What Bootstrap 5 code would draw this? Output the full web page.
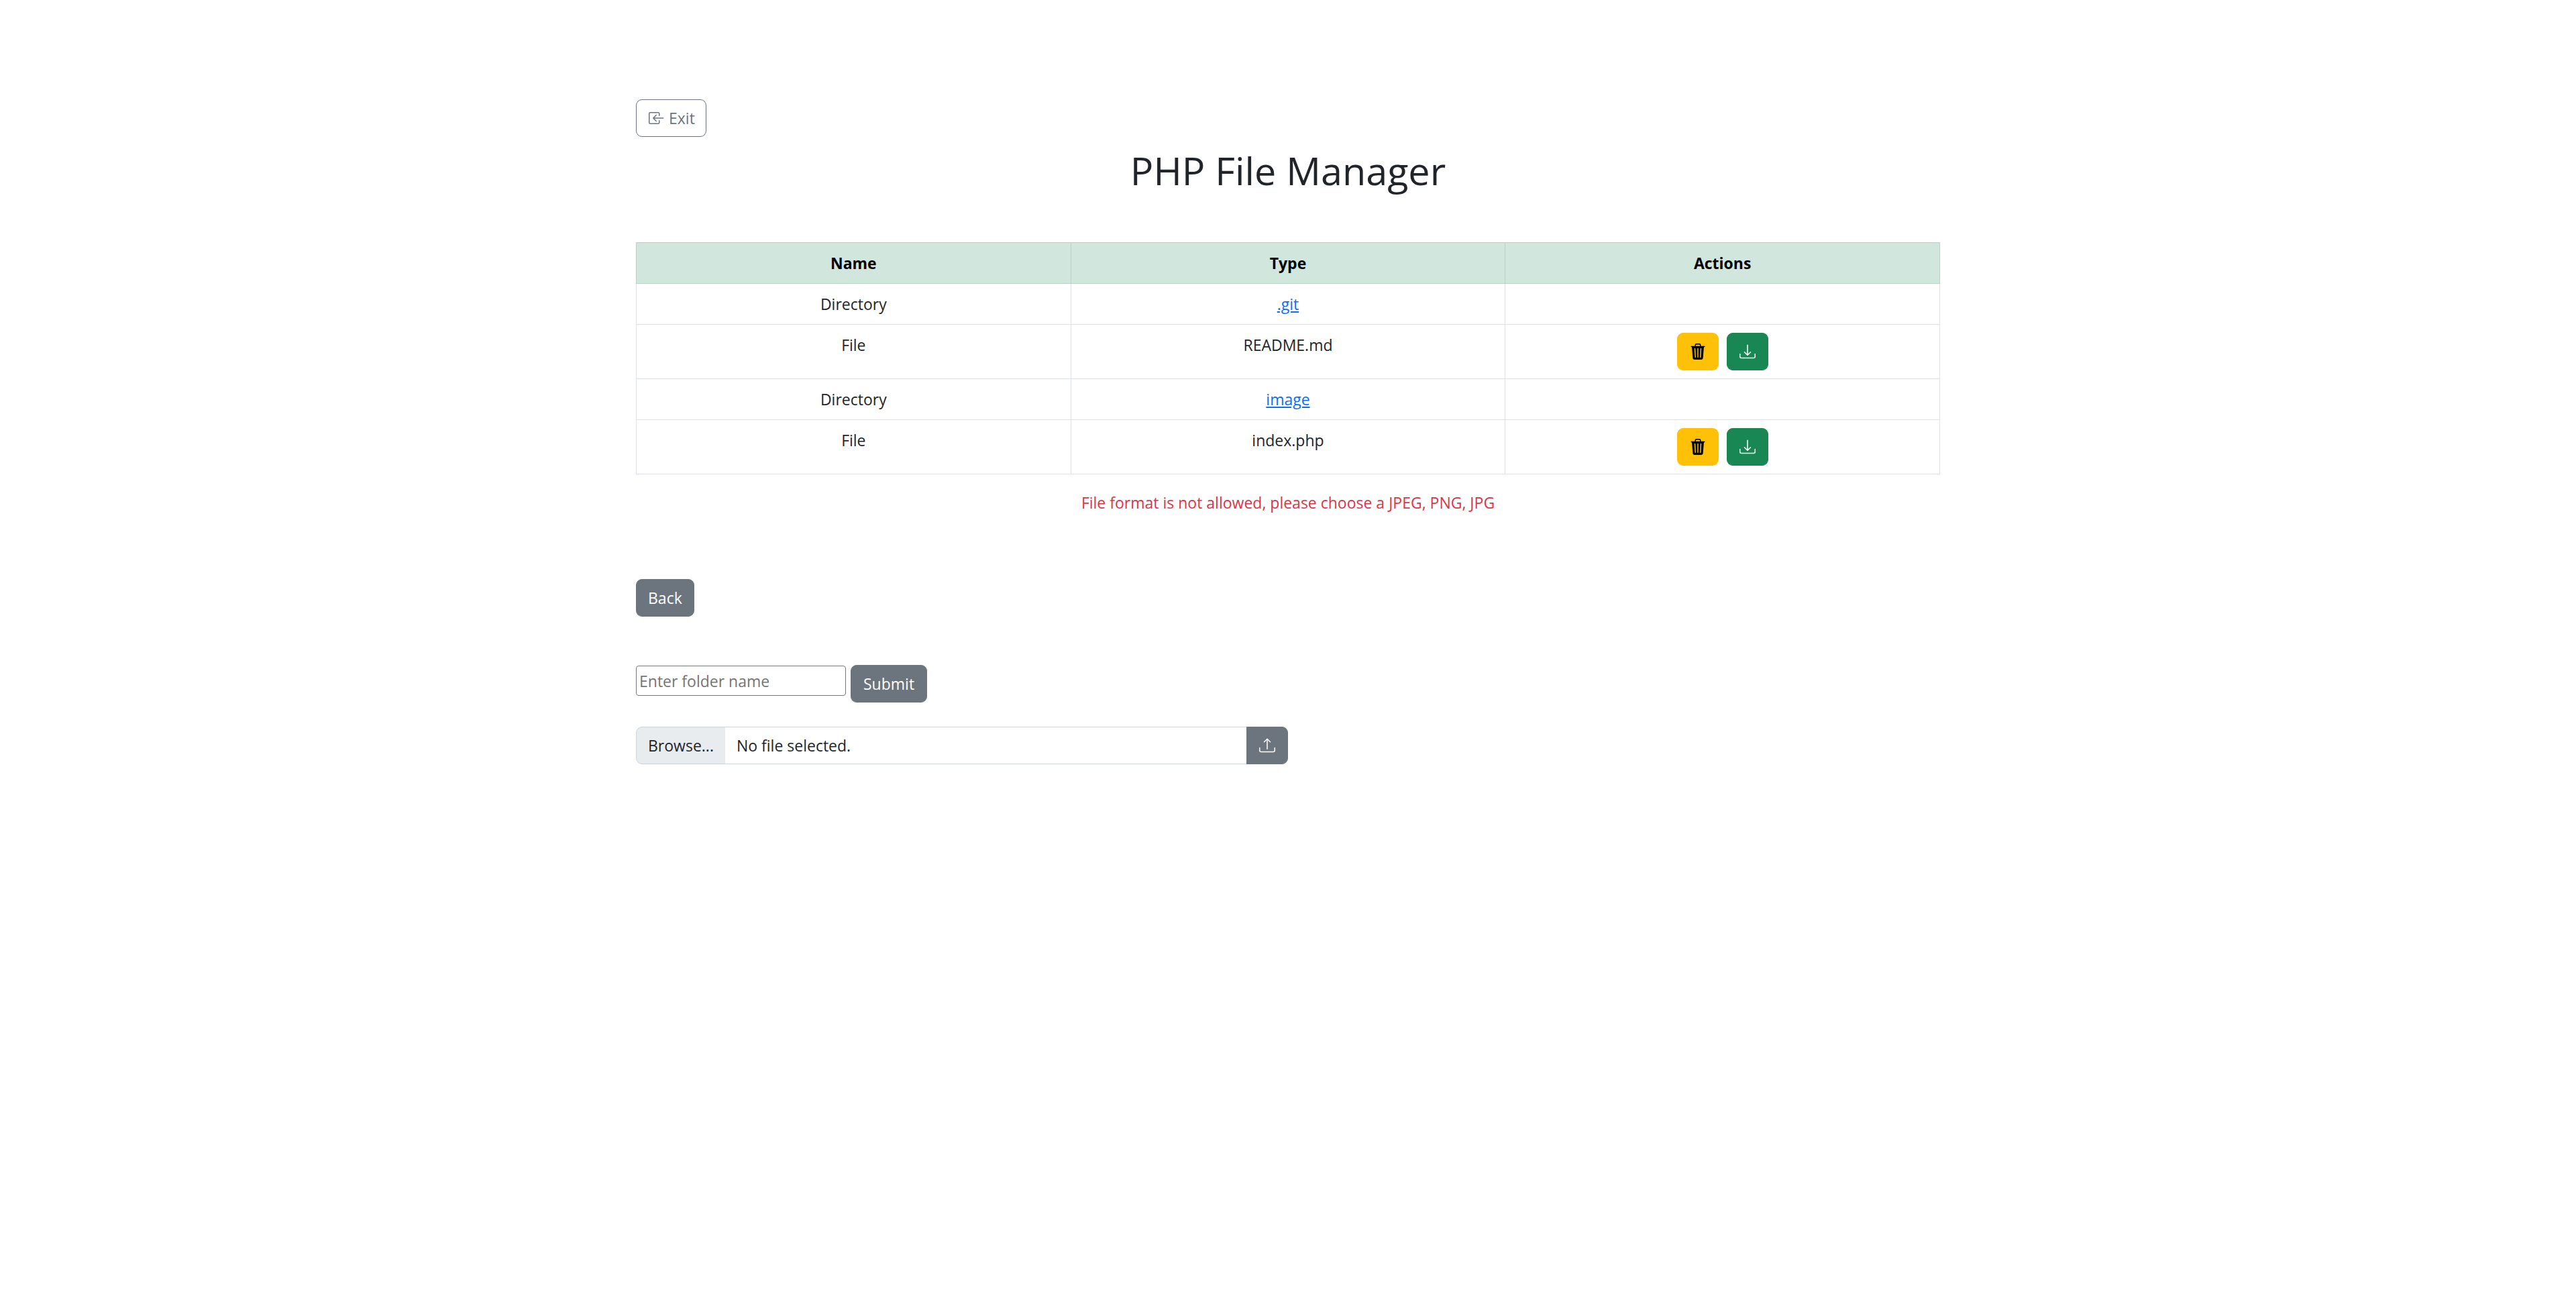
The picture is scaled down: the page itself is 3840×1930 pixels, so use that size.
<!DOCTYPE html>
<html lang="en">
<head>
  <meta charset="UTF-8" />
  <meta name="viewport" content="width=device-width, initial-scale=1" />
  <title>PHP File Manager</title>

  <link href="https://cdn.jsdelivr.net/npm/bootstrap@5.3.0/dist/css/bootstrap.min.css" rel="stylesheet">

  <style>
    /* the page was captured at 150%, so everything hangs off a 24px root */
    html {
      font-size: 24px;
    }

    body {
      font-family: "Open Sans", "Liberation Sans", sans-serif;
      font-size: 23px;
      line-height: 36px;
      color: #212529;
    }

    .pagina {
      max-width: 1980px;
      padding: 148px 18px 0;
    }

    .titulo {
      font-size: 57.5px;
      line-height: 72px;
      margin: 14px 0 71px;
    }

    .tabela {
      margin-bottom: 24px;
    }

    .tabela th,
    .tabela td {
      width: 33.333%;
      padding: 12px;
    }

    .tabela th {
      color: #000;
    }

    .aviso {
      margin-bottom: 96px;
    }

    .btn {
      font-size: 23px;
      line-height: 36px;
      padding: 9px 18px;
    }

    .btn-voltar {
      padding: 9px 17px;
    }

    .btn-sair {
      padding: 9px 16px 9px 18px;
    }

    .btn-icone {
      width: 62px;
      height: 56px;
      padding: 0;
      display: inline-flex;
      align-items: center;
      justify-content: center;
    }

    .form-pasta {
      margin-top: 72px;
      gap: 7px;
    }

    .campo-pasta {
      width: 313px;
      height: 45px;
      font-size: 23px;
      padding: 0 3px 0 4px;
      border: 1.5px solid #767676;
      border-radius: 4px;
      margin-bottom: 10px;
    }

    .campo-pasta::placeholder {
      color: #757575;
    }

    .grupo-envio {
      width: 972px;
      margin-top: 36px;
    }

    .grupo-envio .input-group-text {
      font-size: 23px;
      line-height: 36px;
      padding: 9px 17px;
      background-color: #e9ecef;
      border-color: #ced4da;
    }

    .nome-arquivo {
      font-size: 23px;
      line-height: 36px;
      padding: 9px 17px;
      border-color: #ced4da;
      border-left: 0;
    }
  </style>
</head>
<body>

  <div class="container pagina">
    <a href="#" class="btn btn-outline-secondary btn-sair d-inline-flex align-items-center gap-1">
      <svg xmlns="http://www.w3.org/2000/svg" width="24" height="24" fill="currentColor" viewBox="0 0 16 16">
        <path fill-rule="evenodd" d="M10 3.5a.5.5 0 0 0-.5-.5h-8a.5.5 0 0 0-.5.5v9a.5.5 0 0 0 .5.5h8a.5.5 0 0 0 .5-.5v-2a.5.5 0 0 1 1 0v2A1.5 1.5 0 0 1 9.5 14h-8A1.5 1.5 0 0 1 0 12.5v-9A1.5 1.5 0 0 1 1.5 2h8A1.5 1.5 0 0 1 11 3.5v2a.5.5 0 0 1-1 0v-2z"/>
        <path fill-rule="evenodd" d="M4.146 8.354a.5.5 0 0 1 0-.708l3-3a.5.5 0 1 1 .708.708L5.707 7.5H14.5a.5.5 0 0 1 0 1H5.707l2.147 2.146a.5.5 0 0 1-.708.708l-3-3z"/>
      </svg>
      Exit
    </a>

    <h1 class="titulo text-center fw-normal">PHP File Manager</h1>

    <table class="table table-bordered text-center tabela">
      <thead class="table-success">
        <tr>
          <th>Name</th>
          <th>Type</th>
          <th>Actions</th>
        </tr>
      </thead>
      <tbody>
        <tr>
          <td>Directory</td>
          <td><a href="#">.git</a></td>
          <td></td>
        </tr>
        <tr>
          <td>File</td>
          <td>README.md</td>
          <td>
            <div class="d-flex justify-content-center gap-2">
              <button type="button" class="btn btn-warning btn-icone">
                <svg xmlns="http://www.w3.org/2000/svg" width="24" height="24" fill="currentColor" viewBox="0 0 16 16">
                  <path d="M11 1.5v1h3.5a.5.5 0 0 1 0 1h-.538l-.853 10.66A2 2 0 0 1 11.115 16h-6.23a2 2 0 0 1-1.994-1.84L2.038 3.5H1.5a.5.5 0 0 1 0-1H5v-1A1.5 1.5 0 0 1 6.5 0h3A1.5 1.5 0 0 1 11 1.5Zm-5 0v1h4v-1a.5.5 0 0 0-.5-.5h-3a.5.5 0 0 0-.5.5ZM4.5 5.029l.5 8.5a.5.5 0 1 0 .998-.06l-.5-8.5a.5.5 0 1 0-.998.06Zm6.53-.528a.5.5 0 0 0-.528.47l-.5 8.5a.5.5 0 0 0 .998.058l.5-8.5a.5.5 0 0 0-.47-.528ZM8 4.5a.5.5 0 0 0-.5.5v8.5a.5.5 0 0 0 1 0V5a.5.5 0 0 0-.5-.5Z"/>
                </svg>
              </button>
              <button type="button" class="btn btn-success btn-icone">
                <svg xmlns="http://www.w3.org/2000/svg" width="24" height="24" fill="currentColor" viewBox="0 0 16 16">
                  <path d="M.5 9.9a.5.5 0 0 1 .5.5v2.5a1 1 0 0 0 1 1h12a1 1 0 0 0 1-1v-2.5a.5.5 0 0 1 1 0v2.5a2 2 0 0 1-2 2H2a2 2 0 0 1-2-2v-2.5a.5.5 0 0 1 .5-.5z"/>
                  <path d="M7.646 11.854a.5.5 0 0 0 .708 0l3-3a.5.5 0 0 0-.708-.708L8.5 10.293V1.5a.5.5 0 0 0-1 0v8.793L5.354 8.146a.5.5 0 1 0-.708.708l3 3z"/>
                </svg>
              </button>
            </div>
          </td>
        </tr>
        <tr>
          <td>Directory</td>
          <td><a href="#">image</a></td>
          <td></td>
        </tr>
        <tr>
          <td>File</td>
          <td>index.php</td>
          <td>
            <div class="d-flex justify-content-center gap-2">
              <button type="button" class="btn btn-warning btn-icone">
                <svg xmlns="http://www.w3.org/2000/svg" width="24" height="24" fill="currentColor" viewBox="0 0 16 16">
                  <path d="M11 1.5v1h3.5a.5.5 0 0 1 0 1h-.538l-.853 10.66A2 2 0 0 1 11.115 16h-6.23a2 2 0 0 1-1.994-1.84L2.038 3.5H1.5a.5.5 0 0 1 0-1H5v-1A1.5 1.5 0 0 1 6.5 0h3A1.5 1.5 0 0 1 11 1.5Zm-5 0v1h4v-1a.5.5 0 0 0-.5-.5h-3a.5.5 0 0 0-.5.5ZM4.5 5.029l.5 8.5a.5.5 0 1 0 .998-.06l-.5-8.5a.5.5 0 1 0-.998.06Zm6.53-.528a.5.5 0 0 0-.528.47l-.5 8.5a.5.5 0 0 0 .998.058l.5-8.5a.5.5 0 0 0-.47-.528ZM8 4.5a.5.5 0 0 0-.5.5v8.5a.5.5 0 0 0 1 0V5a.5.5 0 0 0-.5-.5Z"/>
                </svg>
              </button>
              <button type="button" class="btn btn-success btn-icone">
                <svg xmlns="http://www.w3.org/2000/svg" width="24" height="24" fill="currentColor" viewBox="0 0 16 16">
                  <path d="M.5 9.9a.5.5 0 0 1 .5.5v2.5a1 1 0 0 0 1 1h12a1 1 0 0 0 1-1v-2.5a.5.5 0 0 1 1 0v2.5a2 2 0 0 1-2 2H2a2 2 0 0 1-2-2v-2.5a.5.5 0 0 1 .5-.5z"/>
                  <path d="M7.646 11.854a.5.5 0 0 0 .708 0l3-3a.5.5 0 0 0-.708-.708L8.5 10.293V1.5a.5.5 0 0 0-1 0v8.793L5.354 8.146a.5.5 0 1 0-.708.708l3 3z"/>
                </svg>
              </button>
            </div>
          </td>
        </tr>
      </tbody>
    </table>

    <p class="aviso text-center text-danger">File format is not allowed, please choose a JPEG, PNG, JPG</p>

    <a href="#" class="btn btn-secondary btn-voltar">Back</a>

    <form class="form-pasta d-flex align-items-end">
      <input type="text" class="campo-pasta" placeholder="Enter folder name">
      <button type="button" class="btn btn-secondary">Submit</button>
    </form>

    <form class="input-group grupo-envio">
      <label class="input-group-text">Browse...</label>
      <span class="form-control nome-arquivo">No file selected.</span>
      <button type="button" class="btn btn-secondary btn-icone">
        <svg xmlns="http://www.w3.org/2000/svg" width="24" height="24" fill="currentColor" viewBox="0 0 16 16">
          <path d="M.5 9.9a.5.5 0 0 1 .5.5v2.5a1 1 0 0 0 1 1h12a1 1 0 0 0 1-1v-2.5a.5.5 0 0 1 1 0v2.5a2 2 0 0 1-2 2H2a2 2 0 0 1-2-2v-2.5a.5.5 0 0 1 .5-.5z"/>
          <path d="M7.646 1.146a.5.5 0 0 1 .708 0l3 3a.5.5 0 0 1-.708.708L8.5 2.707V11.5a.5.5 0 0 1-1 0V2.707L5.354 4.854a.5.5 0 1 1-.708-.708l3-3z"/>
        </svg>
      </button>
    </form>
  </div>

  <script src="https://cdn.jsdelivr.net/npm/bootstrap@5.3.0/dist/js/bootstrap.bundle.min.js"></script>
</body>
</html>
